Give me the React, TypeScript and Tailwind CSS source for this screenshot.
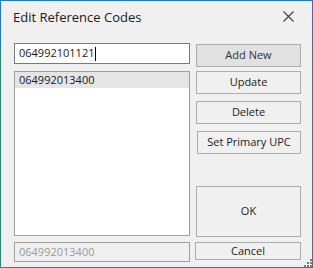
import React from 'react';

const font = { fontFamily: '"Open Sans", "Noto Sans", sans-serif' };

function WinButton({ label, className }: { label: string; className: string }) {
  return (
    <button
      className={`flex items-center justify-center border border-[#adadad] bg-[#e1e1e1] text-[11px] text-[#1a1a1a] ${className}`}
    >
      {label}
    </button>
  );
}

export default function App() {
  return (
    <div
      className="w-[313px] h-[268px] p-px bg-[linear-gradient(to_bottom,#1c79d0_0%,#1c79d0_12%,#2a8577_22%,#2a8577_100%)]"
      style={font}
    >
      <div className="relative flex h-full w-full flex-col bg-[#f0f0f0]">
        {/* title bar */}
        <div className="flex h-[33px] items-center justify-between pl-[12px] pr-[18px]">
          <span className="text-[13px] text-[#1a1a1a]">Edit Reference Codes</span>
          <svg width="11" height="11" viewBox="0 0 11 11" className="mt-[-2px]">
            <path d="M0.5 0.5 L10.5 10.5 M10.5 0.5 L0.5 10.5" stroke="#3c3c3c" strokeWidth="1.1" />
          </svg>
        </div>

        <div className="flex gap-[6px] pl-[13px] pt-[9px]">
          {/* left column */}
          <div className="flex w-[176px] flex-col">
            <div className="flex h-[21px] items-center border border-[#7a7a7a] bg-white pl-[4px] text-[11px] text-[#1a1a1a]">
              064992101121
              <span className="ml-px h-[14px] w-px bg-black" />
            </div>
            <div className="mt-[7px] h-[165px] border border-[#a0a0a0] bg-white">
              <div className="flex h-[16px] items-center bg-[#e5e5e5] pl-[4px] text-[11px] text-[#1a1a1a]">
                064992013400
              </div>
            </div>
            <div className="mt-[6px] flex h-[20px] items-center border border-[#a0a0a0] bg-[#f0f0f0] pl-[4px] text-[11px] text-[#9a9a9a]">
              064992013400
            </div>
          </div>

          {/* right column */}
          <div className="flex w-[105px] flex-col">
            <WinButton label="Add New" className="mt-px h-[23px] bg-[#cccccc] border-[#a8a8a8] text-[#333]" />
            <WinButton label="Update" className="mt-[4px] h-[23px] bg-[#f0f0f0]" />
            <WinButton label="Delete" className="mt-[7px] h-[23px] bg-[#f0f0f0]" />
            <WinButton label="Set Primary UPC" className="mt-[7px] ml-px h-[23px] bg-[#f0f0f0]" />
            <WinButton label="OK" className="mt-[32px] h-[51px] bg-[#f0f0f0]" />
            <WinButton label="Cancel" className="mt-[5px] -ml-px h-[18px] w-[106px] bg-[#f0f0f0]" />
          </div>
        </div>

        {/* resize grip */}
        <svg width="8" height="8" viewBox="0 0 8 8" className="absolute bottom-0 right-0">
          <rect x="6" y="0" width="2" height="2" fill="#7a7a7a" />
          <rect x="3" y="3" width="2" height="2" fill="#7a7a7a" />
          <rect x="6" y="3" width="2" height="2" fill="#7a7a7a" />
          <rect x="0" y="6" width="2" height="2" fill="#7a7a7a" />
          <rect x="3" y="6" width="2" height="2" fill="#7a7a7a" />
          <rect x="6" y="6" width="2" height="2" fill="#7a7a7a" />
        </svg>
      </div>
    </div>
  );
}
